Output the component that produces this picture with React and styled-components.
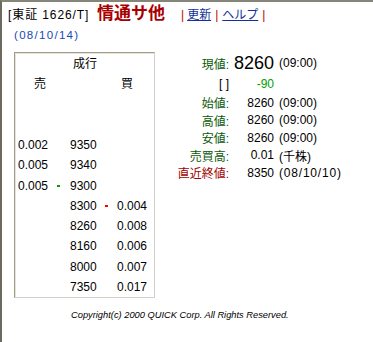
import React from "react";
import styled, { createGlobalStyle } from "styled-components";

const GlobalStyle = createGlobalStyle`
  html, body {
    margin: 0;
    padding: 0;
    background: #ffffff;
  }
  body {
    font-family: "Liberation Sans", "Noto Sans CJK JP", sans-serif;
    font-size: 12px;
    color: #000000;
  }
`;

const Frame = styled.div`
  width: 373px;
  height: 342px;
  box-sizing: border-box;
  border-top: 2px solid #85857a;
  border-left: 2px solid #6a6a5e;
  background: #ffffff;
  overflow: hidden;
`;

const Header = styled.div`
  display: flex;
  align-items: baseline;
  height: 16px;
  line-height: 16px;
  padding: 4px 0 0 6px;
  white-space: nowrap;
`;

const Code = styled.span`
  width: 89px;
  font-size: 12px;
  letter-spacing: 0.9px;
`;

const Title = styled.span`
  width: 81px;
  font-size: 17px;
  font-weight: bold;
  color: #a80000;
`;

const Pipe = styled.span`
  color: #c00000;
  font-size: 12px;
  margin: 0 ${(p) => p.$space || 4}px;
`;

const NavLink = styled.a`
  color: #14309a;
  text-decoration: underline;
  font-size: 12px;
  cursor: pointer;
`;

const DateLine = styled.div`
  height: 14px;
  line-height: 14px;
  margin-top: 6px;
  padding-left: 12px;
  color: #1848b8;
  font-size: 11.5px;
  letter-spacing: 1.3px;
`;

const Body = styled.div`
  display: flex;
  align-items: flex-start;
  margin-top: 10px;
`;

const Board = styled.div`
  display: grid;
  grid-template-columns: 36px 12px 36px 12px 1fr;
  grid-auto-rows: 20.25px;
  align-items: center;
  width: 141px;
  height: 246px;
  box-sizing: border-box;
  margin-left: 12px;
  padding: 1px 0 0 1px;
  border: 1px solid;
  border-color: #a09c8c #d4d0c8 #d4d0c8 #a09c8c;
  box-shadow: inset 1px 1px 0 #e8e4d8;
`;

const Cell = styled.div`
  grid-column: ${(p) => p.$col || "auto"};
  padding-left: ${(p) => p.$pad || 0}px;
  text-align: ${(p) => p.$align || "left"};
  font-size: 12px;
  line-height: 14px;
  white-space: nowrap;
`;

const Marker = styled.span`
  display: block;
  width: 3px;
  height: 2px;
  margin: 0 auto;
  background: ${(p) => p.$color};
`;

const Quote = styled.div`
  display: grid;
  grid-template-columns: 69px 45px auto;
  grid-template-rows: 22px 20px repeat(5, 17.5px);
  align-items: center;
  margin-left: 5px;
`;

const Label = styled.div`
  text-align: right;
  color: ${(p) => p.$color || "#0a5a0a"};
  font-size: 12px;
  white-space: nowrap;
`;

const Value = styled.div`
  text-align: right;
  font-size: ${(p) => (p.$big ? 18 : 12)}px;
  color: ${(p) => p.$color || "#000000"};
  white-space: nowrap;
`;

const Note = styled.div`
  padding-left: 5px;
  font-size: 12px;
  letter-spacing: ${(p) => (p.$wide ? 0.8 : 0)}px;
  white-space: nowrap;
`;

const Copyright = styled.div`
  margin-top: 11px;
  padding-left: 69px;
  height: 12px;
  line-height: 12px;
  font-size: 9.3px;
  font-style: italic;
  white-space: nowrap;
`;

const rows = [
  ["0.002", null, "9350", null, ""],
  ["0.005", null, "9340", null, ""],
  ["0.005", "#00a000", "9300", null, ""],
  ["", null, "8300", "#ff0000", "0.004"],
  ["", null, "8260", null, "0.008"],
  ["", null, "8160", null, "0.006"],
  ["", null, "8000", null, "0.007"],
  ["", null, "7350", null, "0.017"],
];

const quotes = [
  { label: "始値:", value: "8260", note: "(09:00)" },
  { label: "高値:", value: "8260", note: "(09:00)" },
  { label: "安値:", value: "8260", note: "(09:00)" },
  { label: "売買高:", value: "0.01", note: "(千株)" },
  { label: "直近終値:", value: "8350", note: "(08/10/10)", color: "#a00000", wide: true },
];

const App = () => {
  return (
    <>
      <GlobalStyle />
      <Frame>
        <Header>
          <Code>[東証 1626/T]</Code>
          <Title>情通サ他</Title>
          <Pipe $space={3}>|</Pipe>
          <NavLink>更新</NavLink>
          <Pipe $space={4}>|</Pipe>
          <NavLink>ヘルプ</NavLink>
          <Pipe $space={4}>|</Pipe>
        </Header>
        <DateLine>(08/10/14)</DateLine>

        <Body>
          <Board>
            <Cell $col="1 / 6" $align="center">成行</Cell>
            <Cell $col="1 / 3" $align="center">売</Cell>
            <Cell $col="4 / 6" $align="center">買</Cell>
            <Cell $col="1 / 6" />
            <Cell $col="1 / 6" />
            {rows.map((r, i) => (
              <React.Fragment key={i}>
                <Cell $pad={2}>{r[0]}</Cell>
                <Cell>{r[1] && <Marker $color={r[1]} />}</Cell>
                <Cell $pad={6}>{r[2]}</Cell>
                <Cell>{r[3] && <Marker $color={r[3]} />}</Cell>
                <Cell $pad={5}>{r[4]}</Cell>
              </React.Fragment>
            ))}
          </Board>

          <Quote>
            <Label>現値:</Label>
            <Value $big>8260</Value>
            <Note>(09:00)</Note>
            <Label $color="#000000">[ ]</Label>
            <Value $color="#00a000">-90</Value>
            <Note />
            {quotes.map((q) => (
              <React.Fragment key={q.label}>
                <Label $color={q.color}>{q.label}</Label>
                <Value>{q.value}</Value>
                <Note $wide={q.wide}>{q.note}</Note>
              </React.Fragment>
            ))}
          </Quote>
        </Body>

        <Copyright>Copyright(c) 2000 QUICK Corp. All Rights Reserved.</Copyright>
      </Frame>
    </>
  );
};

export default App;
